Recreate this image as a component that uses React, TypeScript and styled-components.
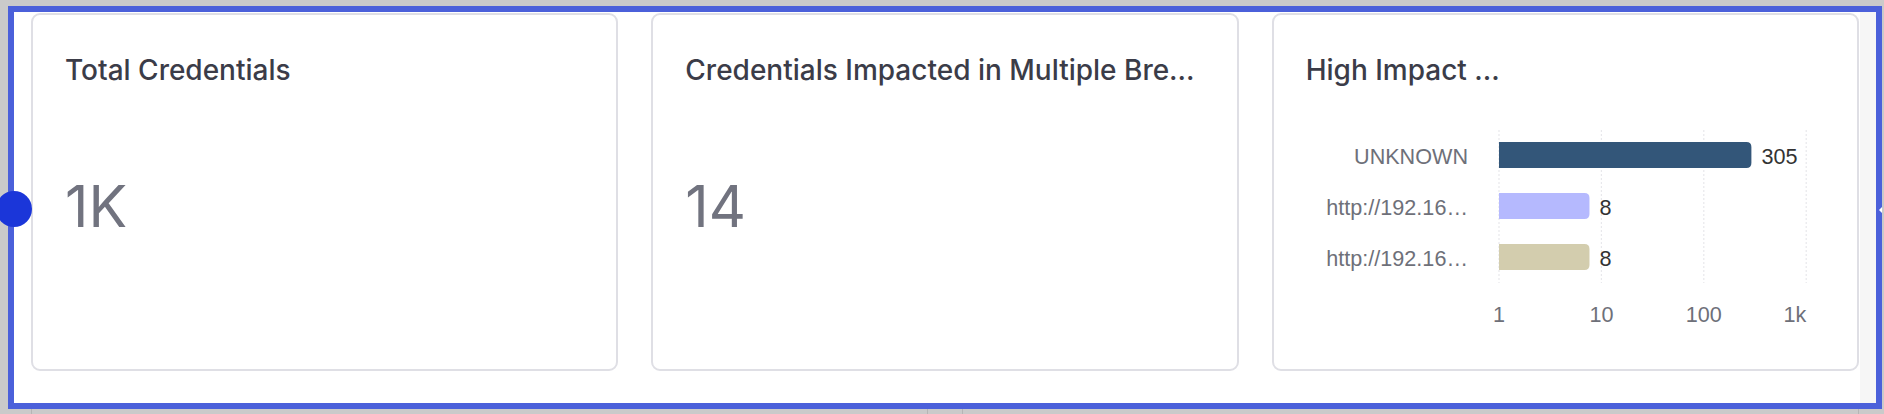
import React from 'react'
import styled, { createGlobalStyle } from 'styled-components'

interface Row {
    label: string
    value: number
    color: string
}

const rows: Row[] = [
    { label: 'UNKNOWN', value: 305, color: '#335679' },
    { label: 'http://192.16…', value: 8, color: '#b5b9fe' },
    { label: 'http://192.16…', value: 8, color: '#d3cdae' },
]

const ticks = ['1', '10', '100', '1k']

// chart geometry (log axis, one decade = DECADE px)
const AXIS_X = 193
const DECADE = 102.4
const BAR_H = 26
const ROW_TOP = 22
const ROW_STEP = 51

const GlobalStyle = createGlobalStyle`
    html, body {
        margin: 0;
        padding: 0;
        background: #cacaca;
    }
    #root {
        padding: 6px 0 0 8px;
    }
`

export default function App(): JSX.Element {
    return (
        <>
            <GlobalStyle />
            <Frame>
                <Handle />
                <Notch />
                <CardRow>
                    <Card>
                        <Title>Total Credentials</Title>
                        <BigValue>1K</BigValue>
                    </Card>
                    <Card>
                        <Title>Credentials Impacted in Multiple Bre...</Title>
                        <BigValue>14</BigValue>
                    </Card>
                    <Card>
                        <Title>High Impact ...</Title>
                        <BarChart rows={rows} />
                    </Card>
                </CardRow>
            </Frame>
            <BelowRow>
                <GhostCard />
                <GhostCard />
            </BelowRow>
        </>
    )
}

function barPath(x: number, y: number, w: number, h: number, r: number): string {
    return `M${x},${y} H${x + w - r} Q${x + w},${y} ${x + w},${y + r} V${y + h - r} Q${x + w},${y + h} ${x + w - r},${y + h} H${x} Z`
}

function BarChart({ rows }: { rows: Row[] }): JSX.Element {
    return (
        <ChartSvg width="517" height="215" viewBox="0 0 517 215">
            {ticks.map((t, i) => (
                <line
                    key={'g' + t}
                    x1={AXIS_X + i * DECADE}
                    x2={AXIS_X + i * DECADE}
                    y1={10}
                    y2={163}
                    stroke="#e8e8ec"
                    strokeWidth={1.2}
                    strokeDasharray="2 2"
                />
            ))}
            {rows.map((r, i) => {
                const top = ROW_TOP + i * ROW_STEP
                const w = Math.log10(r.value) * DECADE - 2
                return (
                    <g key={i}>
                        <text x={162} y={top + 22} textAnchor="end" fill="#6e7079">
                            {r.label}
                        </text>
                        <path d={barPath(AXIS_X, top, w, BAR_H, 5)} fill={r.color} />
                        <text x={AXIS_X + w + 10} y={top + 22} fill="#333">
                            {r.value}
                        </text>
                    </g>
                )
            })}
            {ticks.map((t, i) => (
                <text
                    key={'t' + t}
                    x={AXIS_X + i * DECADE}
                    y={202}
                    textAnchor={i === ticks.length - 1 ? 'end' : 'middle'}
                    fill="#6e7079"
                >
                    {t}
                </text>
            ))}
        </ChartSvg>
    )
}

const Frame = styled.div`
    position: relative;
    box-sizing: border-box;
    width: 1874px;
    height: 403px;
    border: 6px solid #4b60da;
    background: linear-gradient(to right, #fff calc(100% - 16px), #f6f6f6 calc(100% - 16px));
    padding: 1px 17px 0 17px;
`

const Handle = styled.div`
    position: absolute;
    left: -18px;
    top: 179px;
    width: 36px;
    height: 36px;
    border-radius: 50%;
    background: #1b36d9;
`

const Notch = styled.div`
    position: absolute;
    right: -6px;
    top: 195px;
    width: 0;
    height: 0;
    border-top: 3px solid transparent;
    border-bottom: 3px solid transparent;
    border-right: 3px solid #fff;
`

const CardRow = styled.div`
    display: grid;
    grid-template-columns: repeat(3, 1fr);
    gap: 33px;
    height: 358px;
`

const Card = styled.div`
    box-sizing: border-box;
    display: flex;
    flex-direction: column;
    min-width: 0;
    border: 2px solid #dfdfe5;
    border-radius: 9px;
    background: #fff;
    padding: 38px 32px 0 32px;
    font-family: Inter, "Noto Sans", sans-serif;
`

const Title = styled.div`
    font-size: 28px;
    line-height: 34px;
    font-weight: 500;
    color: #3b3c48;
    white-space: nowrap;
    overflow: hidden;
`

const BigValue = styled.div`
    margin-top: 91px;
    font-size: 57.6px;
    line-height: 1;
    font-weight: 400;
    color: #71737f;
`

const ChartSvg = styled.svg`
    display: block;
    margin-top: 33px;
    font-family: "Liberation Sans", Arial, sans-serif;
    font-size: 21.6px;
`

const BelowRow = styled.div`
    display: flex;
    gap: 34px;
    padding-left: 23px;
    height: 5px;
`

const GhostCard = styled.div`
    box-sizing: border-box;
    width: 897px;
    height: 5px;
    border-left: 1px solid #b5b5b5;
    border-right: 1px solid #b5b5b5;
`
